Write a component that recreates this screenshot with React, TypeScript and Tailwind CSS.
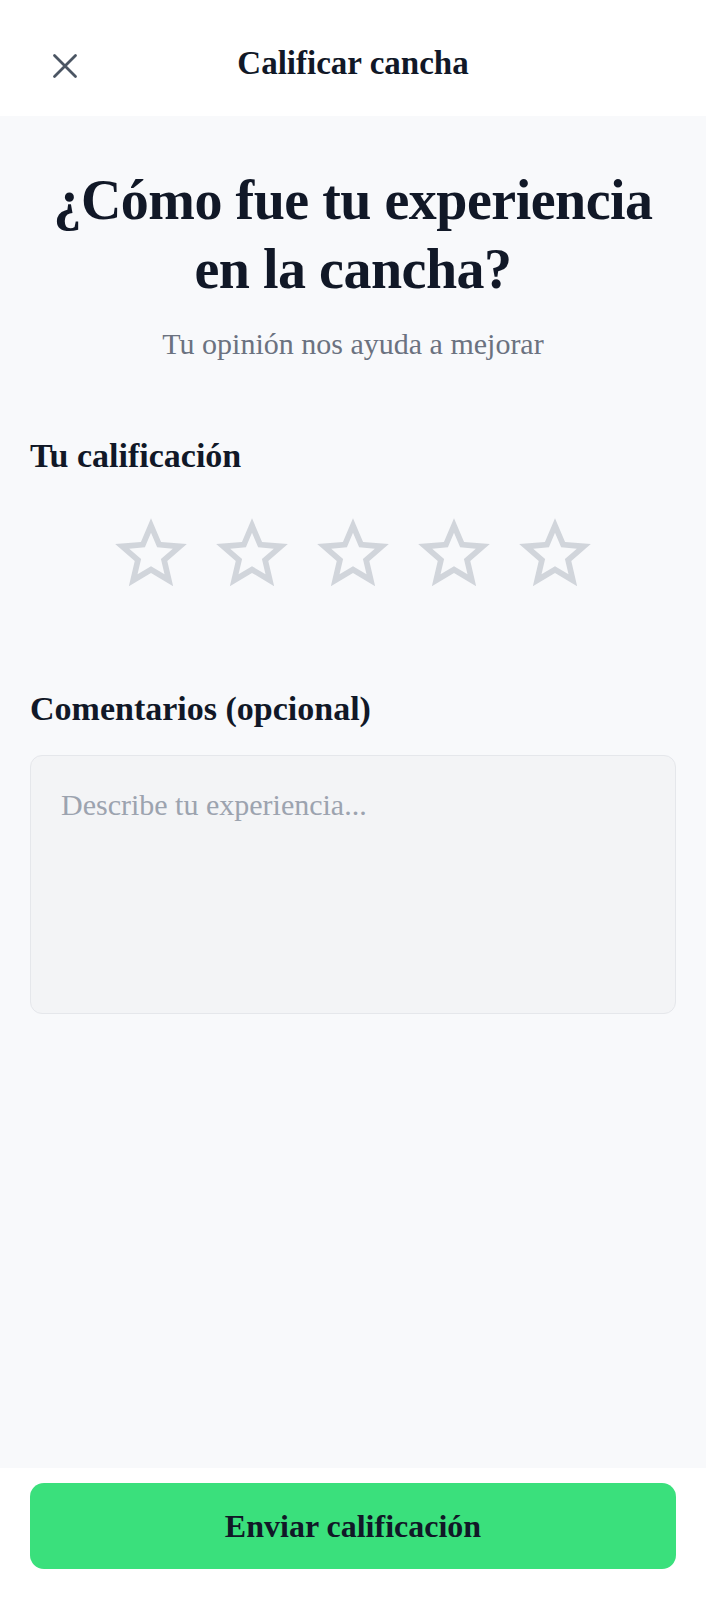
import { useState } from "react";

const serif = "font-['Liberation_Serif','DejaVu_Serif',serif]";

function StarOutline({ filled }: { filled: boolean }) {
  return (
    <svg viewBox="0 0 24 24" className="w-[86px] h-[86px]" fill="currentColor">
      {filled ? (
        <path d="M12 17.27L18.18 21l-1.64-7.03L22 9.24l-7.19-.61L12 2 9.19 8.63 2 9.24l5.46 4.73L5.82 21z" />
      ) : (
        <path d="M22 9.24l-7.19-.62L12 2 9.19 8.63 2 9.24l5.46 4.73L5.82 21 12 17.27 18.18 21l-1.63-7.03L22 9.24zM12 15.4l-3.76 2.27 1-4.28-3.32-2.88 4.38-.38L12 6.1l1.71 4.04 4.38.38-3.32 2.88 1 4.28L12 15.4z" />
      )}
    </svg>
  );
}

export default function App() {
  const [rating, setRating] = useState(0);
  const [comment, setComment] = useState("");

  return (
    <div className={`min-h-[1600px] flex flex-col bg-[#f8f9fb] ${serif}`}>
      {/* header */}
      <header className="h-[116px] bg-white flex items-center relative px-[44px] pt-[10px]">
        <button className="text-[#4b5563] w-[42px] h-[42px] mt-[5px] flex items-center justify-center">
          <svg viewBox="0 0 24 24" className="w-[42px] h-[42px]" fill="none" stroke="currentColor" strokeWidth={1.6} strokeLinecap="round">
            <path d="M18 6 6 18M6 6l12 12" />
          </svg>
        </button>
        <h1 className="absolute left-0 right-0 text-center text-[33px] leading-[40px] font-bold text-[#111827] pointer-events-none">
          Calificar cancha
        </h1>
      </header>

      <main className="flex-1 px-[30px] pt-[50px]">
        <h2 className="text-center text-[56px] leading-[69px] font-bold text-[#111827] tracking-[-0.5px]">
          ¿Cómo fue tu experiencia
          <br />
          en la cancha?
        </h2>
        <p className="text-center text-[30px] leading-[36px] text-[#6b7280] mt-[22px]">Tu opinión nos ayuda a mejorar</p>

        <h3 className="mt-[74px] text-[34px] leading-[40px] font-bold text-[#111827]">Tu calificación</h3>
        <div className="mt-[35px] flex justify-center gap-[15px] text-[#d1d5db]">
          {[1, 2, 3, 4, 5].map((n) => (
            <button key={n} onClick={() => setRating(n)} className={n <= rating ? "text-[#fbbf24]" : ""}>
              <StarOutline filled={n <= rating} />
            </button>
          ))}
        </div>

        <h3 className="mt-[92px] text-[34px] leading-[40px] font-bold text-[#111827]">Comentarios (opcional)</h3>
        <textarea
          value={comment}
          onChange={(e) => setComment(e.target.value)}
          placeholder="Describe tu experiencia..."
          className="mt-[26px] block w-full h-[259px] resize-none rounded-xl border border-[#e5e7eb] bg-[#f3f4f6] px-[30px] pt-[31px] pb-[20px] text-[30px] leading-[36px] text-[#111827] placeholder:text-[#9ca3af] outline-none"
        />
      </main>

      <footer className="bg-white px-[30px] pt-[15px] pb-[31px]">
        <button className="w-full h-[86px] rounded-[14px] bg-[#3ae07c] text-[32px] font-bold text-[#111827]">
          Enviar calificación
        </button>
      </footer>
    </div>
  );
}
